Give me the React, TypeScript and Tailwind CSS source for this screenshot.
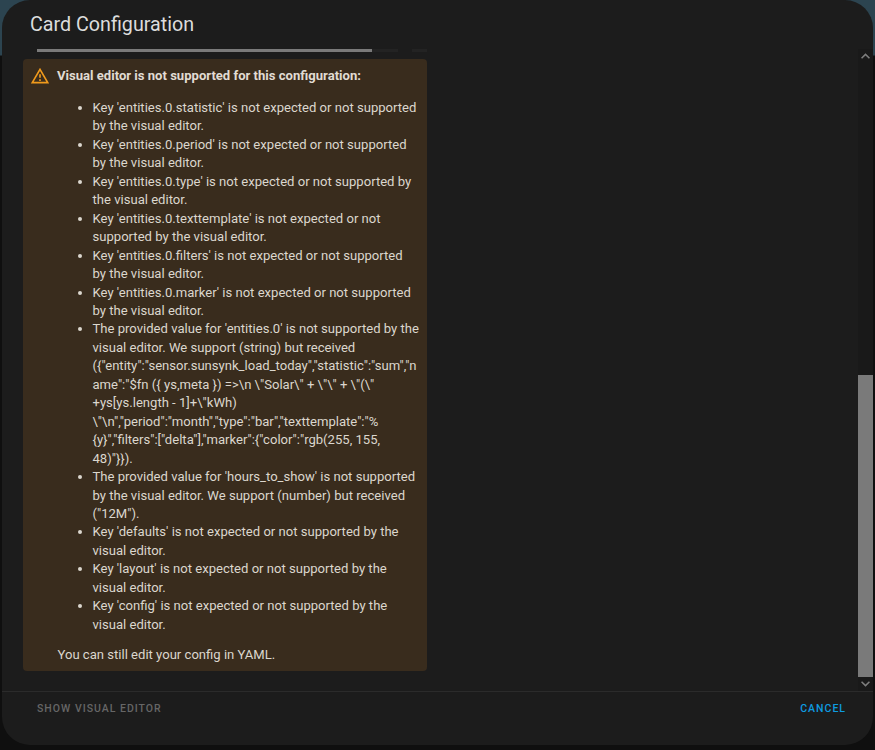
const errors = [
  "Key 'entities.0.statistic' is not expected or not supported by the visual editor.",
  "Key 'entities.0.period' is not expected or not supported by the visual editor.",
  "Key 'entities.0.type' is not expected or not supported by the visual editor.",
  "Key 'entities.0.texttemplate' is not expected or not supported by the visual editor.",
  "Key 'entities.0.filters' is not expected or not supported by the visual editor.",
  "Key 'entities.0.marker' is not expected or not supported by the visual editor.",
  `The provided value for 'entities.0' is not supported by the visual editor. We support (string) but received ({"entity":"sensor.sunsynk_load_today","statistic":"sum","name":"$fn ({ ys,meta }) =>\\n \\"Solar\\" + \\"\\" + \\"(\\" +ys[ys.length - 1]+\\"kWh) \\"\\n","period":"month","type":"bar","texttemplate":"%{y}","filters":["delta"],"marker":{"color":"rgb(255, 155, 48)"}}).`,
  "The provided value for 'hours_to_show' is not supported by the visual editor. We support (number) but received (\"12M\").",
  "Key 'defaults' is not expected or not supported by the visual editor.",
  "Key 'layout' is not expected or not supported by the visual editor.",
  "Key 'config' is not expected or not supported by the visual editor.",
];

function WarningIcon() {
  return (
    <svg viewBox="0 0 24 24" className="h-[20px] w-[20px] shrink-0 fill-[#f09a1c]">
      <path d="M12,2L1,21H23M12,6L19.53,19H4.47M11,10V14H13V10M11,16V18H13V16" />
    </svg>
  );
}

function Scrollbar() {
  return (
    <div className="flex w-[15px] shrink-0 flex-col bg-[#191919]">
      <div className="flex h-[15px] items-center justify-center">
        <svg viewBox="0 0 10 6" className="h-[6px] w-[9px] fill-[#7d7d7d]">
          <path d="M5 0 10 5 8.8 6 5 2.4 1.2 6 0 5Z" />
        </svg>
      </div>
      <div className="h-[311px]" />
      <div className="h-[303px] bg-[#7a7a7a]" />
      <div className="flex h-[14px] items-center justify-center">
        <svg viewBox="0 0 10 6" className="h-[6px] w-[9px] fill-[#7d7d7d]">
          <path d="M5 6 10 1 8.8 0 5 3.6 1.2 0 0 1Z" />
        </svg>
      </div>
    </div>
  );
}

export default function App() {
  return (
    <div className="h-[750px] w-[875px] overflow-hidden bg-[linear-gradient(to_bottom,#2c4450_0px,#2c4450_55px,#0f0f0f_56px,#0f0f0f_100%)] font-['Roboto',sans-serif]">
      <div className="mx-[2px] flex h-[745px] flex-col overflow-hidden rounded-[28px] bg-[#1c1c1c]">
        <h2 className="ml-[28px] mt-[12px] h-[37px] text-[19.7px] leading-[26px] text-[#dcdcdc]">
          Card Configuration
        </h2>
        <div className="flex min-h-0 flex-1">
          <div className="flex w-[856px] flex-col pl-[21px]">
            <div className="flex h-[3px] w-[404px] pl-[14px]">
              <div className="h-[3px] w-[335px] bg-[#7a7a7a]" />
              <div className="h-[3px] w-[26px] bg-[#232323]" />
              <div className="ml-[14px] h-[3px] w-[15px] bg-[#232323]" />
            </div>
            <div className="mt-[7px] h-[612px] w-[404px] rounded-[4px] bg-[#392c1d] text-[13.08px] leading-[18.45px] text-[#dcd7ce]">
              <div className="flex items-center gap-[7px] pl-[7px] pt-[7px]">
                <WarningIcon />
                <b className="font-bold text-[#e1dcd3]">Visual editor is not supported for this configuration:</b>
              </div>
              <ul className="mt-[13px] list-disc pl-[69.5px] pr-[8px]">
                {errors.map((e) => (
                  <li key={e} className="break-words">
                    {e}
                  </li>
                ))}
              </ul>
              <p className="ml-[34.5px] mt-[12px]">You can still edit your config in YAML.</p>
            </div>
          </div>
          <Scrollbar />
        </div>
        <div className="flex h-[54px] items-start justify-between border-t border-[#2b2b2b] pl-[35px] pr-[27px] pt-[9px] text-[10.5px] font-medium tracking-[1px] leading-[16px]">
          <button className="text-[#666666]">SHOW VISUAL EDITOR</button>
          <button className="text-[#0e9be0]">CANCEL</button>
        </div>
      </div>
    </div>
  );
}
